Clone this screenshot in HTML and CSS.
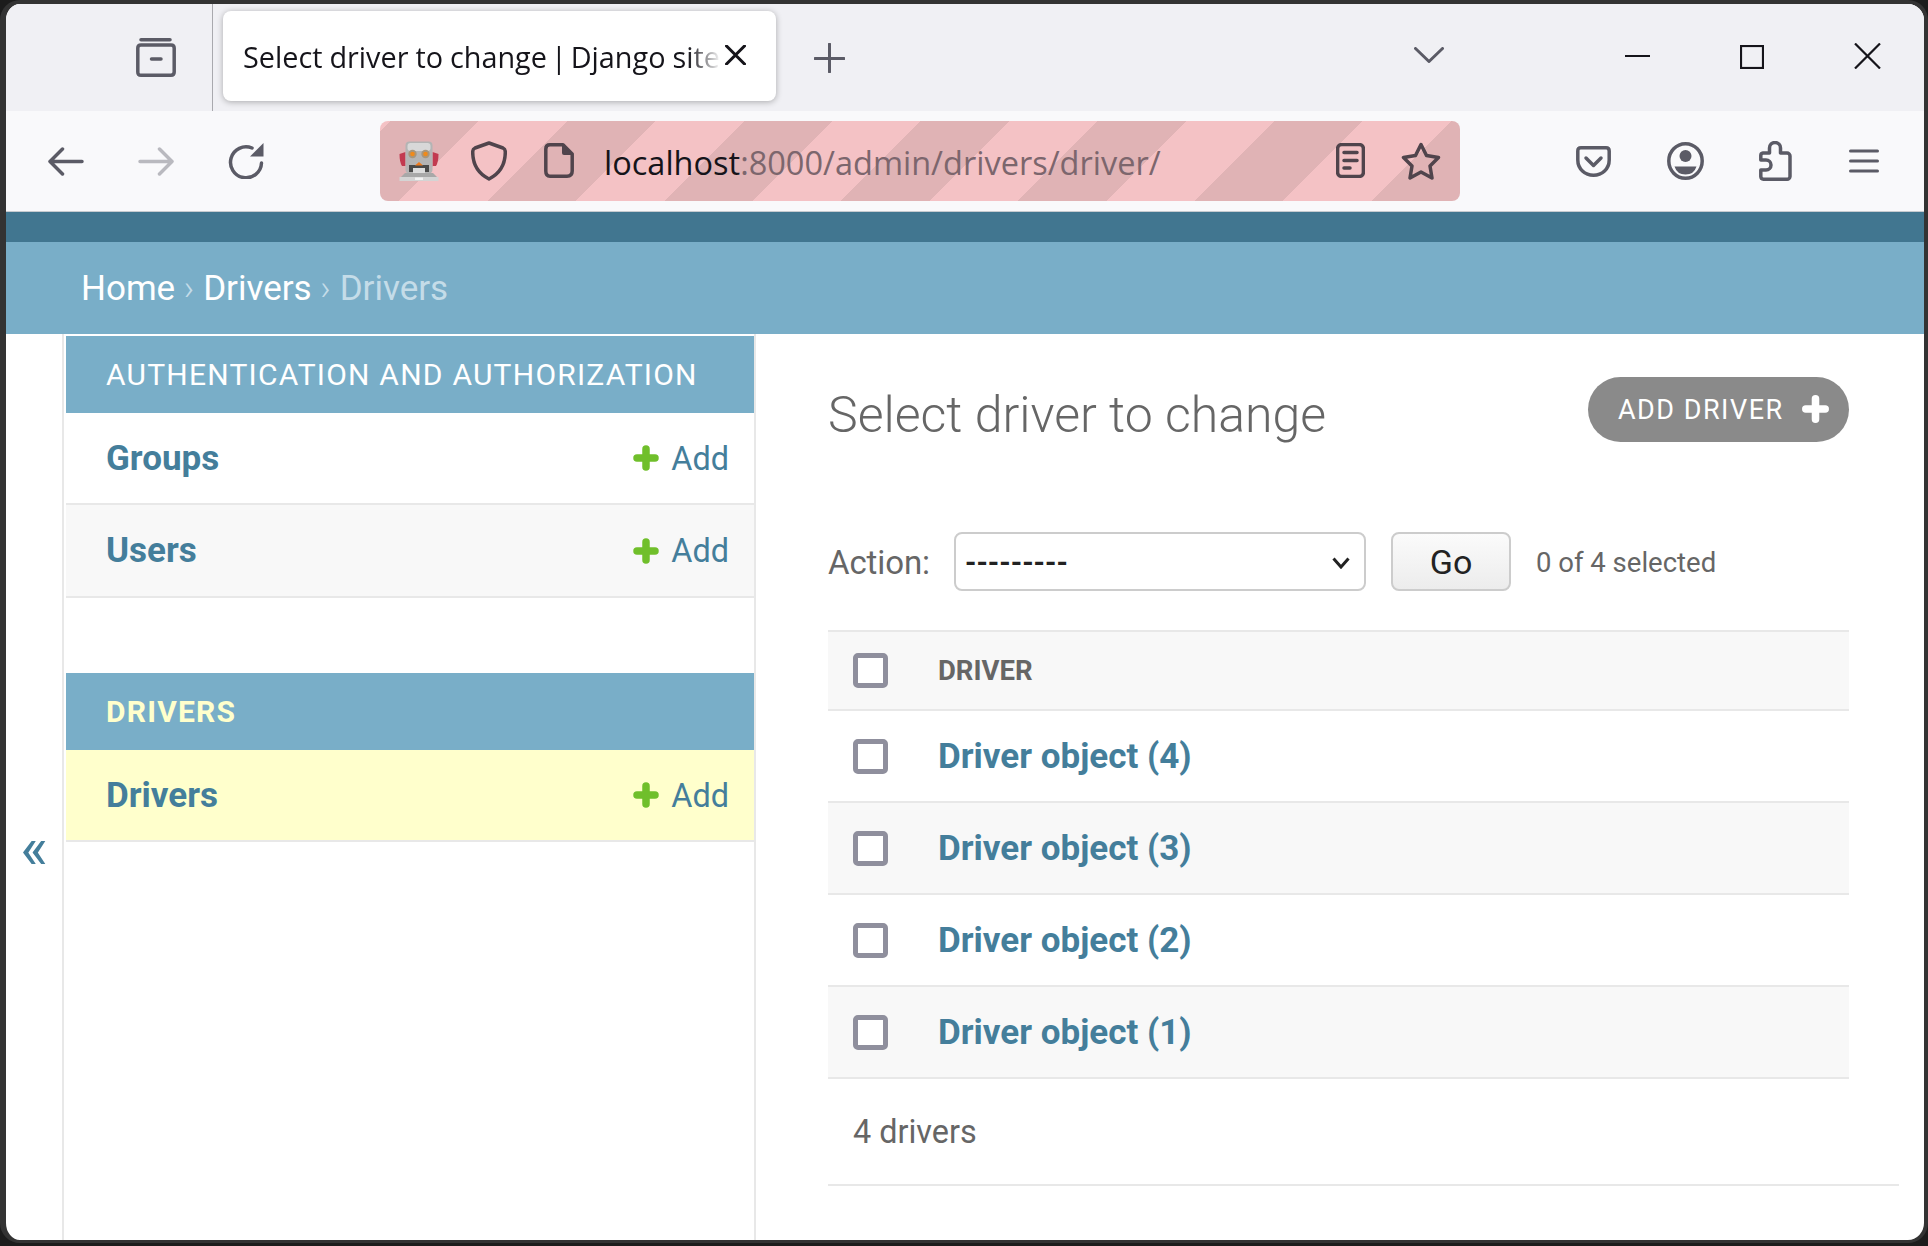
FILE: index.html
```html
<!DOCTYPE html>
<html lang="en">
<head>
<meta charset="utf-8">
<title>Select driver to change | Django site admin</title>
<link rel="stylesheet" href="styles.css">
</head>
<body>
<div class="window">
  <div class="tabbar">
    <div class="view-box">
      <svg class="i-view" viewBox="0 0 40 39"><path d="M5 1.8H34" class="s4"/><path d="M5 7H35Q38.2 7 38.2 10V34Q38.2 37.2 35 37.2H5Q1.8 37.2 1.8 34V10Q1.8 7 5 7Z" class="s4"/><path d="M15.5 21H25" class="s4"/></svg>
    </div>
    <div class="tab">
      <span class="tab-title">Select driver to change <span class="tab-pipe">|</span> Django site</span>
      <svg class="i-tabclose" viewBox="0 0 21 20"><path d="M1.5 1L19.5 19M19.5 1L1.5 19" class="s-black"/></svg>
    </div>
    <svg class="i-plus" viewBox="0 0 31 30"><path d="M15.5 1V29M1 15.5H30" class="s3"/></svg>
    <svg class="i-chev" viewBox="0 0 30 16"><path d="M1.5 1.5L15 14.5L28.5 1.5" class="s3"/></svg>
    <svg class="i-min" viewBox="0 0 25 4"><path d="M0 2H25" class="s-win"/></svg>
    <svg class="i-max" viewBox="0 0 24 24"><rect x="1" y="1" width="22" height="22" class="s-win"/></svg>
    <svg class="i-close" viewBox="0 0 27 26"><path d="M1 0.5L26 25.5M26 0.5L1 25.5" class="s-win"/></svg>
  </div>

  <div class="navbar">
    <svg class="i-back" viewBox="0 0 37 29"><path d="M35 14.5H4M15.5 2L3 14.5L15.5 27" class="s4"/></svg>
    <svg class="i-forward" viewBox="0 0 37 29"><path d="M2 14.5H33M21.5 2L34 14.5L21.5 27" class="s4 faded"/></svg>
    <svg class="i-reload" viewBox="0 0 36 36"><path d="M24 5A15.5 15.5 0 1 0 33.5 20" class="s4"/><path d="M35.5 0V13.5H22Z" class="f-grey"/></svg>
    <div class="urlbar">
      <svg class="i-robot" viewBox="0 0 40 40">
        <path d="M0.5 13L6.5 11V25H3Q0.5 21 0.5 13ZM39.5 13L33.5 11V25H37Q39.5 21 39.5 13Z" fill="#c23a50"/>
        <rect x="6.5" y="0.5" width="27" height="32" rx="4" fill="#b4b4b4"/>
        <rect x="8.5" y="2" width="23" height="8" rx="3" fill="#d8d8d8"/>
        <circle cx="13.5" cy="13" r="4.2" fill="#a8957a"/><circle cx="13.5" cy="13" r="2.3" fill="#f08a1a"/>
        <circle cx="26.5" cy="13" r="4.2" fill="#a8957a"/><circle cx="26.5" cy="13" r="2.3" fill="#f08a1a"/>
        <path d="M10 24H30V31H26V27H14V31H10Z" fill="#4a4a4a"/>
        <rect x="14" y="27" width="12" height="5" fill="#dcdcdc"/>
        <path d="M16 24.5L20 21L24 24.5Z" fill="#f07a1a"/>
        <path d="M2 36L6 32H34L38 36Z" fill="#a8a8a8"/>
        <rect x="0.5" y="36" width="39" height="4" fill="#d4d4d4"/>
        <rect x="16" y="36.5" width="8" height="2.5" fill="#f2f2f2"/>
      </svg>
      <svg class="i-shield" viewBox="0 0 36 40"><path d="M18 2L32 7Q34.3 8 34.3 11C34.3 24 28 33 18 38C8 33 1.7 24 1.7 11Q1.7 8 4 7Z" class="s-url"/></svg>
      <svg class="i-page" viewBox="0 0 30 35"><path d="M6 1.8H19L28.2 11V28Q28.2 33.2 23 33.2H6Q1.8 33.2 1.8 28V6Q1.8 1.8 6 1.8Z" class="s-url"/><path d="M18 1.8L28.2 12H20Q18 12 18 10Z" class="f-url"/></svg>
      <div class="url"><span class="url-host">localhost</span>:8000/admin/drivers/driver/</div>
      <svg class="i-reader" viewBox="0 0 29 35"><rect x="1.6" y="1.6" width="25.8" height="31.8" rx="4" class="s-url"/><path d="M8 9.5H21M8 17.5H21M8 25H14" class="s-url"/></svg>
      <svg class="i-star" viewBox="0 0 40 38"><path d="M20 2.5L25.5 13.5L37.5 15.5L29 24L31 36L20 30L9 36L11 24L2.5 15.5L14.5 13.5Z" class="s-url"/></svg>
    </div>
    <svg class="i-pocket" viewBox="0 0 35 31"><path d="M5 1.8H30Q33.2 1.8 33.2 5V14C33.2 23 26 29.2 17.5 29.2C9 29.2 1.8 23 1.8 14V5Q1.8 1.8 5 1.8Z" class="s4"/><path d="M10 12L17.5 19.5L25 12" class="s4"/></svg>
    <svg class="i-account" viewBox="0 0 37 38"><ellipse cx="18.5" cy="19" rx="16.7" ry="17.2" class="s4"/><circle cx="18.5" cy="14" r="6" class="f-grey2"/><path d="M7.5 24.5H29.5Q27 32.5 18.5 32.5Q10 32.5 7.5 24.5Z" class="f-grey2"/></svg>
    <svg class="i-ext" viewBox="0 0 33 40"><path d="M4 12H10.5V7A5.5 5.5 0 0 1 21.5 7V12H28A3 3 0 0 1 31 15V35.5A2.8 2.8 0 0 1 28 38.2H4.5A2.8 2.8 0 0 1 1.8 35.5V29H7A5 5 0 0 0 7 19H1.8V14.5A2.5 2.5 0 0 1 4 12Z" class="s4"/></svg>
    <svg class="i-menu" viewBox="0 0 30 24"><path d="M1.5 2H28.5M1.5 12H28.5M1.5 22H28.5" class="s3"/></svg>
  </div>

  <div class="page-header"></div>
  <div class="breadcrumbs"><a class="crumb-link">Home</a><span class="sep">›</span><a class="crumb-link">Drivers</a><span class="sep">›</span><span class="crumb-current">Drivers</span></div>

  <div class="main">
    <div class="toggle"><span class="toggle-glyph">«</span></div>
    <nav class="sidebar">
      <div class="caption">AUTHENTICATION AND AUTHORIZATION</div>
      <div class="side-row"><a class="side-link">Groups</a><a class="add-link"><svg class="i-add" viewBox="0 0 26 26"><path d="M13 4V22M4 13H22" class="add-stroke"/></svg>Add</a></div>
      <div class="side-row row-alt"><a class="side-link">Users</a><a class="add-link"><svg class="i-add" viewBox="0 0 26 26"><path d="M13 4V22M4 13H22" class="add-stroke"/></svg>Add</a></div>
      <div class="caption caption-current">DRIVERS</div>
      <div class="side-row row-current"><a class="side-link">Drivers</a><a class="add-link"><svg class="i-add" viewBox="0 0 26 26"><path d="M13 4V22M4 13H22" class="add-stroke"/></svg>Add</a></div>
    </nav>
    <main class="content">
      <div class="title-row">
        <h1 class="title">Select driver to change</h1>
        <a class="add-button">ADD DRIVER<svg class="i-addw" viewBox="0 0 25 26"><path d="M12.5 3.5V22.5M3.5 13H21.5" class="addw-stroke"/></svg></a>
      </div>
      <div class="actions">
        <label class="action-label">Action:</label>
        <div class="select-wrap">
          <select class="action-select"><option>---------</option></select>
          <svg class="i-select" viewBox="0 0 18 12"><path d="M1.5 1.5L9 10L16.5 1.5" class="s-select"/></svg>
        </div>
        <button class="go">Go</button>
        <span class="counter">0 of 4 selected</span>
      </div>
      <div class="results">
        <div class="res-head"><span class="check"></span><span class="col-title">DRIVER</span></div>
        <div class="res-row"><span class="check"></span><a class="res-link">Driver object (4)</a></div>
        <div class="res-row row-alt"><span class="check"></span><a class="res-link">Driver object (3)</a></div>
        <div class="res-row"><span class="check"></span><a class="res-link">Driver object (2)</a></div>
        <div class="res-row row-alt"><span class="check"></span><a class="res-link">Driver object (1)</a></div>
      </div>
      <div class="paginator">4 drivers</div>
    </main>
  </div>
</div>
</body>
</html>
```

FILE: styles.css
```css
* { box-sizing: border-box; }
html, body { margin: 0; padding: 0; height: 100%; }
body { background: #1c1c1c; overflow: hidden; font-family: Roboto, "Liberation Sans", sans-serif; }
svg { display: block; flex: none; fill: none; }

.window {
  width: 1928px; height: 1243px;
  border-style: solid; border-color: #333;
  border-width: 4px 4px 3px 6px;
  border-radius: 20px;
  background: #fff;
  overflow: hidden;
  display: flex; flex-direction: column;
}

.s3 { stroke: #5b5b66; stroke-width: 3; stroke-linecap: round; stroke-linejoin: round; }
.s4 { stroke: #5b5b66; stroke-width: 3.5; stroke-linecap: round; stroke-linejoin: round; }
.faded { stroke: #b9b9bf; }
.f-grey { fill: #5b5b66; }
.f-grey2 { fill: #5b5b66; }
.s-url { stroke: #50444c; stroke-width: 3.5; stroke-linecap: round; stroke-linejoin: round; }
.f-url { fill: #50444c; }
.s-black { stroke: #15141a; stroke-width: 3; stroke-linecap: round; }
.s-win { stroke: #15141a; stroke-width: 2.2; }

/* tab strip */
.tabbar { height: 107px; flex: none; background: #f0f0f4; display: flex; align-items: center; }
.view-box { width: 207px; height: 107px; border-right: 1px solid #a9a9ae; display: flex; align-items: center; padding-left: 130px; flex: none; }
.i-view { width: 40px; height: 39px; margin-top: -1px; }
.tab {
  width: 553px; height: 90px; margin: -3px 0 0 10px; flex: none;
  background: #fff; border-radius: 8px;
  box-shadow: 0 1px 6px rgba(0,0,0,.3);
  display: flex; align-items: center; padding-left: 20px; position: relative;
}
.tab-title {
  width: 480px; white-space: nowrap; overflow: hidden; padding-top: 2px;
  font: 400 28.8px/40px "Open Sans", sans-serif; color: #15141a; word-spacing: -0.5px;
  -webkit-mask-image: linear-gradient(90deg, #000 445px, transparent 478px);
  mask-image: linear-gradient(90deg, #000 445px, transparent 478px);
}
.tab-pipe { margin: 0 -3px; }
.i-tabclose { width: 21px; height: 20px; margin-left: 2px; margin-top: -2px; }
.i-plus { width: 31px; height: 30px; margin-left: 38px; }
.i-chev { width: 30px; height: 16px; margin-left: 569px; margin-top: -6px; }
.i-min { width: 25px; height: 4px; margin-left: 181px; margin-top: -4px; }
.i-max { width: 24px; height: 24px; margin-left: 90px; margin-top: -2px; }
.i-close { width: 27px; height: 26px; margin-left: 90px; margin-top: -3px; }

/* navigation bar */
.navbar { height: 101px; flex: none; background: #f9f9fb; border-bottom: 1px solid #c6cbd0; display: flex; align-items: center; }
.i-back { width: 37px; height: 29px; margin-left: 41px; }
.i-forward { width: 37px; height: 29px; margin-left: 54px; }
.i-reload { width: 36px; height: 36px; margin-left: 53px; margin-top: -1px; }
.urlbar {
  width: 1080px; height: 80px; margin: -1px 0 0 116px; flex: none;
  border-radius: 8px; display: flex; align-items: center; padding: 0 19px;
  background: repeating-linear-gradient(135deg, #f4c2c5 0, #f4c2c5 7.5px, #e0b3b5 7.5px, #e0b3b5 70px, #f4c2c5 70px, #f4c2c5 125px);
}
.i-robot { width: 40px; height: 40px; }
.i-shield { width: 36px; height: 40px; margin-left: 32px; }
.i-page { width: 30px; height: 35px; margin-left: 37px; }
.url { flex: 1; margin-left: 30px; padding-top: 4px; font: 400 32.5px/44px "Open Sans", sans-serif; color: #7c666d; white-space: nowrap; }
.url-host { color: #15141a; }
.i-reader { width: 29px; height: 35px; }
.i-star { width: 40px; height: 38px; margin-left: 36px; }
.i-pocket { width: 35px; height: 31px; margin-left: 116px; }
.i-account { width: 37px; height: 38px; margin-left: 56px; }
.i-ext { width: 33px; height: 40px; margin-left: 55px; }
.i-menu { width: 30px; height: 24px; margin-left: 57px; margin-top: -1px; }

/* django header */
.page-header { height: 30px; flex: none; background: #417690; }
.breadcrumbs {
  height: 92px; flex: none; background: #79aec8; padding-left: 75px;
  display: flex; align-items: center;
  font-size: 35px; font-weight: 400; color: #c4dce8;
}
.crumb-link { color: #fff; }
.crumb-current { color: #c4dce8; }
.sep { margin: 0 9px 0 8.5px; color: #c4dce8; font-weight: 300; }

/* layout */
.main { flex: 1; display: flex; min-height: 0; }
.toggle { width: 56px; flex: none; display: flex; align-items: center; justify-content: center; padding: 121px 0 0 0; }
.toggle-glyph { font-size: 59px; line-height: 1; color: #447e9b; }

.sidebar { width: 694px; flex: none; border-left: 2px solid #e8e8e8; border-right: 2px solid #e8e8e8; padding: 2px 0 0 2px; }
.caption { height: 77px; background: #79aec8; color: #fff; padding-left: 40px; display: flex; align-items: center; font-size: 30px; letter-spacing: 1.23px; font-weight: 400; }
.caption-current { margin-top: 75px; color: #ffc; font-weight: 700; }
.side-row { height: 92px; display: flex; align-items: center; justify-content: space-between; padding: 0 25px 0 40px; border-bottom: 2px solid #e8e8e8; }
.row-alt { background: #f8f8f8; height: 93px; }
.row-current { background: #ffc; }
.side-link { color: #447e9b; font-size: 35px; font-weight: 700; }
.add-link { color: #447e9b; font-size: 32.4px; display: flex; align-items: center; padding-top: 1px; }
.i-add { width: 26px; height: 26px; margin-right: 12px; margin-top: -1px; }
.add-stroke { stroke: #70bf2b; stroke-width: 7.5; stroke-linecap: round; }

.content { flex: 1; padding: 43px 25px 0 72px; min-width: 0; }
.title-row { display: flex; justify-content: space-between; align-items: flex-start; width: 1021px; }
.title { margin: 8px 0 0; font-size: 50px; line-height: 60px; font-weight: 300; color: #666; }
.add-button { width: 261px; height: 65px; border-radius: 33px; background: #8a8a8a; color: #fff; display: flex; align-items: center; padding-left: 30px; font-size: 27px; letter-spacing: 1.5px; }
.i-addw { width: 27px; height: 28px; margin-left: 18px; margin-top: -1px; }
.addw-stroke { stroke: #fff; stroke-width: 7; stroke-linecap: round; }

.actions { display: flex; align-items: center; margin-top: 87px; height: 59px; width: 1021px; }
.action-label { font-size: 33px; letter-spacing: -0.1px; color: #666; width: 126px; padding-top: 2px; }
.select-wrap { position: relative; width: 412px; height: 59px; }
.action-select { appearance: none; -webkit-appearance: none; width: 100%; height: 100%; border: 2px solid #ccc; border-radius: 8px; background: #fff; padding-left: 9px; font: 700 29px Roboto, sans-serif; color: #222; }
.i-select { position: absolute; right: 16px; top: 25px; width: 18px; height: 12px; }
.s-select { stroke: #222; stroke-width: 3; }
.go { width: 120px; height: 59px; margin-left: 25px; border: 2px solid #ccc; border-radius: 8px; background: linear-gradient(#fbfbfb, #ececec); font: 400 34px Roboto, sans-serif; color: #222; padding: 0; }
.counter { margin-left: 25px; padding-top: 1px; font-size: 27.5px; color: #666; }

.results { margin-top: 39px; width: 1021px; }
.res-head { height: 81px; background: #f8f8f8; border-top: 2px solid #e8e8e8; border-bottom: 2px solid #e8e8e8; display: flex; align-items: center; padding-left: 25px; }
.res-row { height: 92px; border-bottom: 2px solid #e8e8e8; display: flex; align-items: center; padding-left: 25px; }
.check { width: 35px; height: 35px; border: 5px solid #8f8f9d; border-radius: 5px; background: #fff; flex: none; margin-right: 50px; }
.col-title { font-size: 27.5px; font-weight: 700; color: #666; }
.res-link { font-size: 35px; font-weight: 700; color: #447e9b; }
.paginator { height: 107px; border-bottom: 2px solid #e8e8e8; display: flex; align-items: center; padding-left: 25px; font-size: 32.4px; color: #666; }
```
